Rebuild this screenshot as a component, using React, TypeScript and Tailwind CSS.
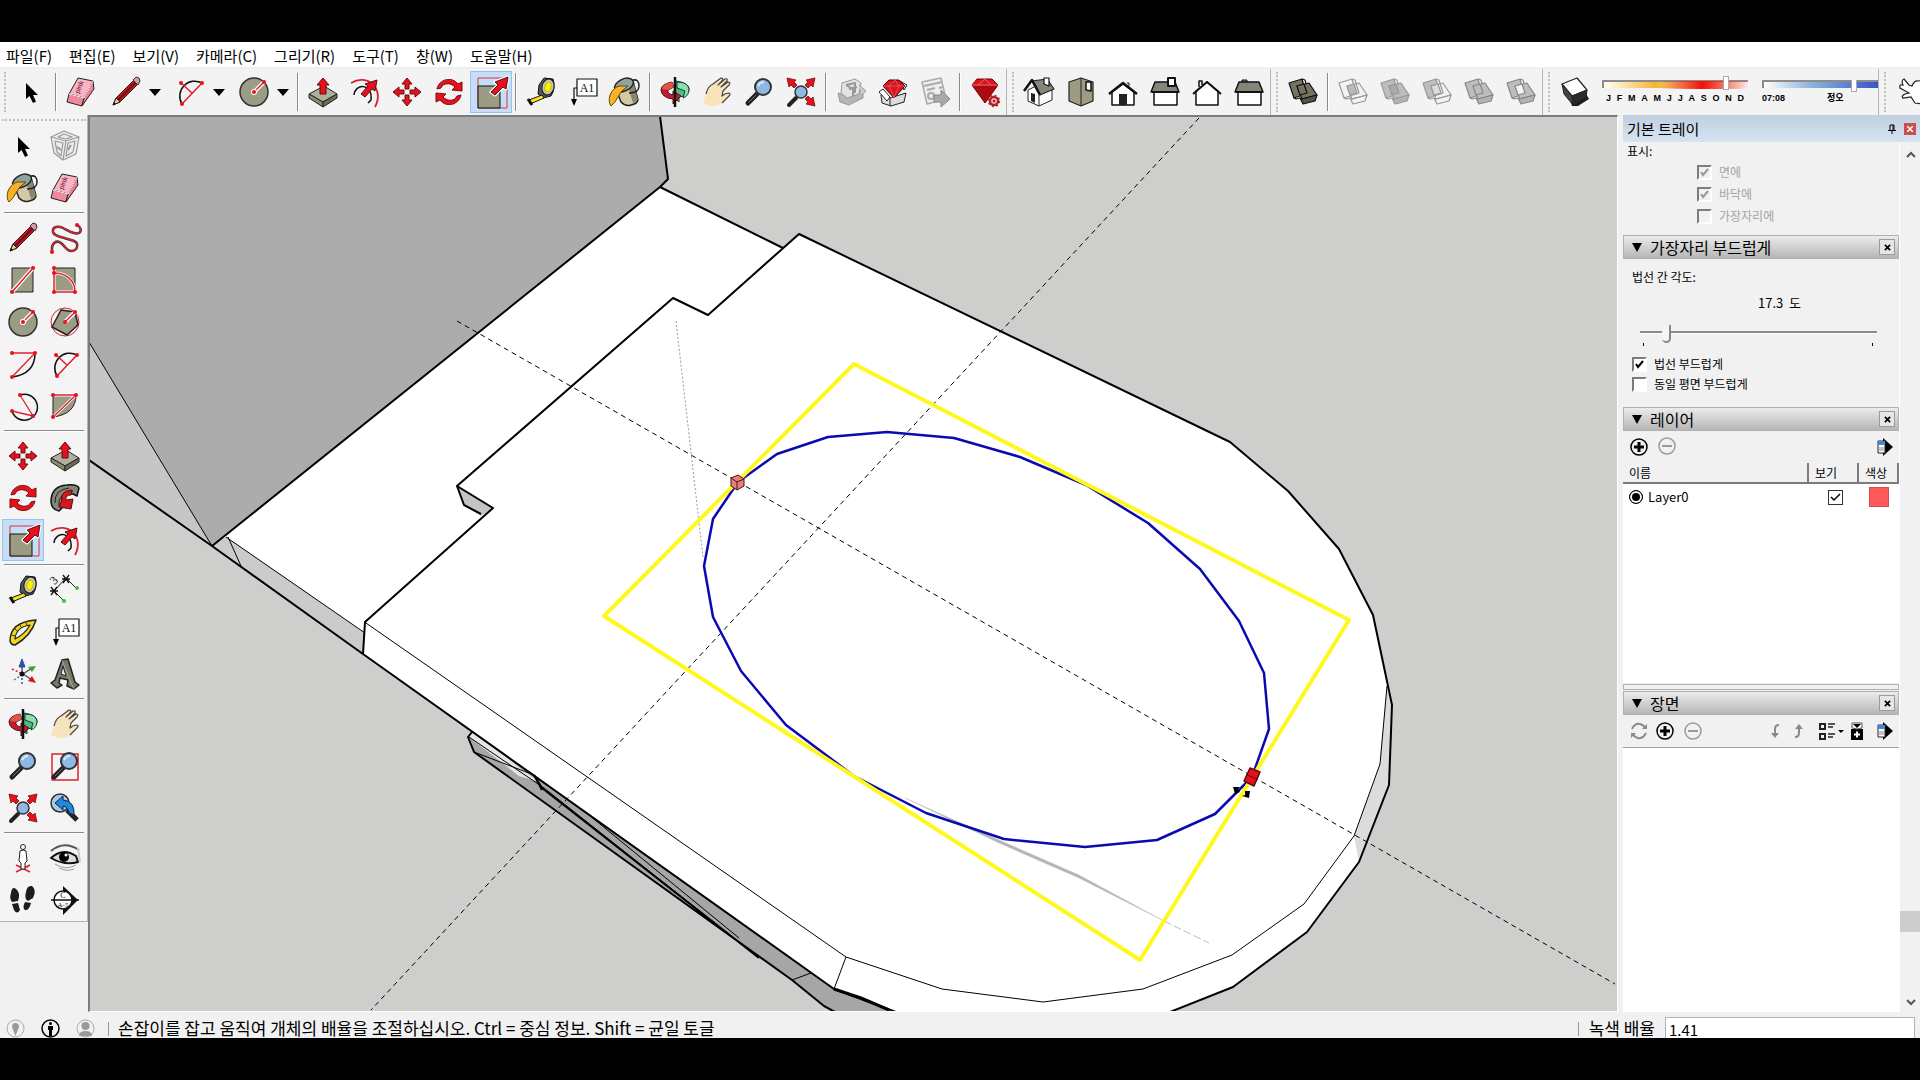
import type { ReactNode } from "react";

const menus = ["파일(F)", "편집(E)", "보기(V)", "카메라(C)", "그리기(R)", "도구(T)", "창(W)", "도움말(H)"];

const Icon = ({ children }: { children: ReactNode }) => (
  <svg viewBox="0 0 32 32" className="h-8 w-8 shrink-0 overflow-visible" fill="none" strokeLinejoin="round" aria-hidden="true">
    {children}
  </svg>
);

const Dot = ({ x, y }: { x: number; y: number }) => <circle cx={x} cy={y} r="2" fill="#e8101c" />;

const Select = () => (
  <Icon><path d="M11 7V23L14.500 20L18 27L21 25.500L18 19H23Z" fill="#000" /></Icon>
);

const Eraser = () => (
  <Icon>
    <path d="M13 2L28 5L19 22L4 18Z" fill="#fbb4c4" stroke="#222" />
    <path d="M4 18L19 22L17 30L2 26Z" fill="#f4879c" stroke="#222" />
    <path d="M28 5L29 13L17 30L19 22Z" fill="#f77c93" stroke="#222" />
    <path d="M4 18L19 22L28 5" stroke="#fff" />
    <text x="0" y="0" transform="translate(14 18) rotate(-68)" fontSize="7" fontFamily="Liberation Sans" fill="#411">pink</text>
  </Icon>
);

const Pencil = () => (
  <Icon>
    <path d="M3 29L6 22L24 4L28 8L10 26Z" fill="#c9151e" stroke="#222" />
    <path d="M8 24L26 6" stroke="#6b1015" strokeWidth="2" />
    <path d="M3 29L6 22L10 26Z" fill="#e4cf9b" stroke="#222" />
    <path d="M3 29L4 26L6 28Z" fill="#111" />
    <path d="M23 4L26 1Q30 1 30 5L28 9Z" fill="#d59ba0" stroke="#333" />
  </Icon>
);

const TwoPointArc = () => (
  <Icon>
    <path d="M8 28A15 15 0 0 1 28 7" stroke="#111" strokeWidth="1.500" />
    <path d="M8 28L28 7M18 17L7 7" stroke="#e02030" strokeWidth="1.500" />
    <Dot x={8} y={28} /><Dot x={28} y={7} /><Dot x={7} y={7} />
  </Icon>
);

const CircleTool = () => (
  <Icon>
    <circle cx="16" cy="16" r="14" fill="#9c9c84" stroke="#333" strokeWidth="1.500" />
    <path d="M16 16L26 6" stroke="#fff" strokeWidth="4" />
    <path d="M16 16L26 6" stroke="#e02030" strokeWidth="1.500" />
    <circle cx="16" cy="16" r="3" fill="#fff" />
    <Dot x={16} y={16} /><Dot x={26} y={6} />
  </Icon>
);

const PushPull = () => (
  <Icon>
    <path d="M2 18L17 10L30 18L16 26Z" fill="#b0b09a" stroke="#222" />
    <path d="M2 18L16 26V31L2 22Z" fill="#8b8b75" stroke="#222" />
    <path d="M30 18L16 26V31L30 22Z" fill="#6c6c5a" stroke="#222" />
    <path d="M16 2L22 9H19V18H13V9H10Z" fill="#e8101c" stroke="#511" />
  </Icon>
);

const Offset = () => (
  <Icon>
    <path d="M2 7C18 -3 36 12 26 31" stroke="#d9222e" strokeWidth="1.800" />
    <path d="M5 19C6 7 24 7 22 24L19 27" stroke="#111" strokeWidth="1.500" />
    <path d="M12 18L19 10L16 8L28 4L26 15L23 13L16 21Z" fill="#e8101c" stroke="#511" />
  </Icon>
);

const arrowUp = "M16 2L21 8H18V13H14V8H11Z";
const Move = () => (
  <Icon>
    <g fill="#e8101c" stroke="#611">
      <path d={arrowUp} />
      <path d={arrowUp} transform="rotate(90 16 16)" />
      <path d={arrowUp} transform="rotate(180 16 16)" />
      <path d={arrowUp} transform="rotate(270 16 16)" />
    </g>
  </Icon>
);

const turnArrow = "M4 13C6 3 19 0 25 8L29 6L29 15L19 14L22 11C17 6 10 7 8 12Z";
const Rotate = () => (
  <Icon>
    <g fill="#e8101c" stroke="#711">
      <path d={turnArrow} />
      <path d={turnArrow} transform="rotate(180 16 16)" />
    </g>
  </Icon>
);

const Scale = () => (
  <Icon>
    <path d="M3 2H32V32H3Z" stroke="#e0303c" />
    <path d="M3 10H25V32H3Z" fill="#9c9c84" stroke="#111" />
    <path d="M16 16L23 9L20 6L33 1L31 13L28 11L20 19Z" fill="#e8101c" stroke="#fff" strokeWidth="3" />
    <path d="M16 16L23 9L20 6L33 1L31 13L28 11L20 19Z" fill="#e8101c" stroke="#511" />
  </Icon>
);

const Tape = () => (
  <Icon>
    <path d="M14 9L19 2L28 3Q31 12 26 20L18 22L13 18Z" fill="#555" stroke="#111" />
    <ellipse cx="23" cy="11" rx="6" ry="8" fill="#c8c8b4" stroke="#111" transform="rotate(15 23 11)" />
    <ellipse cx="23" cy="11" rx="3" ry="5" fill="#fff200" stroke="#bb0" transform="rotate(15 23 11)" />
    <path d="M17 19L4 24L5 28L19 22Z" fill="#f5e61e" stroke="#111" />
    <path d="M3 23L7 29" stroke="#111" strokeWidth="3" />
  </Icon>
);

const Label = () => (
  <Icon>
    <path d="M10 3H30V20H10Z" fill="#fff" stroke="#111" strokeWidth="1.200" />
    <path d="M10 12H7V25" stroke="#111" strokeWidth="1.200" />
    <path d="M4 23H10L7 30Z" fill="#000" />
    <text x="20" y="16" textAnchor="middle" fontSize="12" fontFamily="Liberation Serif" fill="#111">A1</text>
  </Icon>
);

const Bucket = () => (
  <Icon>
    <path d="M7 13L12 26Q17 31 22 29Q28 28 29 24L24 5Z" fill="#d3c9a4" stroke="#222" strokeWidth="1.500" />
    <path d="M20 14L25 8L29 24L24 27Z" fill="#8c8670" />
    <ellipse cx="15" cy="9" rx="10" ry="6" transform="rotate(-25 15 9)" fill="#8fa39f" stroke="#222" strokeWidth="1.500" />
    <path d="M24 4Q30 3 30 10Q30 17 20 17" stroke="#222" strokeWidth="1.500" />
    <path d="M10 10L19 10Q12 14 9 21Q6 27 2 30Q-1 26 1 19Q4 12 10 10Z" fill="#f9b222" stroke="#664411" />
  </Icon>
);

const Orbit = () => (
  <Icon>
    <path d="M17 5Q31 7 30 14Q29 20 20 21V26L13 20" fill="#57b884" stroke="#143" />
    <path d="M18 6V12L26 15L24 22Q30 20 30 13Q29 6 18 6Z" fill="#8fdcae" stroke="#143" />
    <path d="M13 6Q2 8 2 14Q3 22 14 23V28L22 20L14 15V19Q8 18 9 14L15 11Z" fill="#c41a34" stroke="#411" />
    <path d="M13 6Q3 8 3 13L9 14L15 11Z" fill="#e05548" />
    <path d="M16 1V31" stroke="#111" strokeWidth="2.500" />
  </Icon>
);

const Hand = () => (
  <Icon>
    <path d="M2 27L5 18Q7 10 12 8L20 2Q23 2 21 5L17 9L24 3Q27 2 26 5L20 11L27 6Q30 6 28 9L22 15L21 20Q24 17 28 17Q30 18 28 20L21 27Q15 31 9 30Z" fill="#f7e3bc" />
    <path d="M5 18Q7 10 12 8L20 2Q23 2 21 5L17 9L24 3Q27 2 26 5L20 11L27 6Q30 6 28 9L22 15L21 20Q24 17 28 17Q30 18 28 20L21 27" stroke="#444" strokeWidth="1.200" />
  </Icon>
);

const Lens = () => (
  <>
    <path d="M5 27L14 18" stroke="#222" strokeWidth="5" strokeLinecap="round" />
    <path d="M6 26L13 19" stroke="#777" strokeLinecap="round" />
    <circle cx="20" cy="11" r="8" fill="#8fb8e4" stroke="#333" strokeWidth="2" />
    <path d="M15 10Q17 6 21 6" stroke="#dcebfa" strokeWidth="2" />
  </>
);

const Zoom = () => <Icon><Lens /></Icon>;

const ZoomWindow = () => (
  <Icon><path d="M3 4H29V30H3Z" stroke="#e02030" strokeWidth="1.500" /><Lens /></Icon>
);

const cornerArrow = "M2 2L11 4L9 6L12 9L9 12L6 9L4 11Z";
const ZoomExtents = () => (
  <Icon>
    <path d="M4 29L11 22" stroke="#222" strokeWidth="4" strokeLinecap="round" />
    <circle cx="16" cy="16" r="6" fill="#8fb8e4" stroke="#333" strokeWidth="1.500" />
    <g fill="#e8101c" stroke="#611" strokeWidth="0.800">
      <path d={cornerArrow} />
      <path d={cornerArrow} transform="rotate(90 16 16)" />
      <path d={cornerArrow} transform="rotate(180 16 16)" />
    </g>
  </Icon>
);

const Warehouse = () => (
  <Icon>
    <path d="M3 17L12 20L28 13V22L14 29L5 26Z" fill="#b5b5b5" stroke="#999" />
    <path d="M7 7L20 3L26 7L24 18L12 22L6 17Z" fill="#e3e3e3" stroke="#999" />
    <path d="M11 9L20 7V17M11 9L18 13V20M14 13L22 11" stroke="#999" strokeWidth="2" />
    <path d="M24 9L31 15L27 19" fill="#ccc" stroke="#999" />
  </Icon>
);

const ExtensionWarehouse = () => (
  <Icon>
    <path d="M4 19L13 22L29 17L27 26L14 30L5 27Z" fill="#ddd" stroke="#222" />
    <path d="M2 16L6 13L13 21L10 25ZM23 5L30 9L27 14Z" fill="#fff" stroke="#222" />
    <path d="M13 22V30" stroke="#222" />
    <path d="M6 10L12 4H22L28 10L17 22Z" fill="#d9161f" stroke="#400" />
    <path d="M6 10H28M12 10L17 22L22 10L18 4L12 10" stroke="#e86a6a" strokeWidth="0.700" />
  </Icon>
);

const SendLayout = () => (
  <Icon>
    <path d="M3 6L22 2L27 23L8 28Z" fill="#eee" stroke="#aaa" strokeWidth="1.500" />
    <path d="M5 10L23 6M8 14L16 12M20 12L24 11" stroke="#aaa" strokeWidth="2" />
    <circle cx="12" cy="20" r="3" stroke="#aaa" strokeWidth="2" />
    <path d="M15 19H22V14L31 23L22 31V26H15Z" fill="#aaa" stroke="#888" />
  </Icon>
);

const Ruby = () => (
  <Icon>
    <path d="M3 9L8 3H23L29 9L16 27Z" fill="#d9161f" stroke="#700" />
    <path d="M4 10H28L16 27Z" fill="#7a0008" fillOpacity="0.500" />
    <path d="M3 9H29M9 9L16 3L22 9" stroke="#f47b7b" strokeWidth="0.700" />
    <circle cx="25" cy="25" r="4" fill="#f2dada" stroke="#b52026" strokeWidth="2.500" />
    <circle cx="25" cy="25" r="5.500" stroke="#b52026" strokeWidth="1.500" strokeDasharray="2 2.300" />
    <circle cx="25" cy="25" r="1.500" fill="#b52026" />
  </Icon>
);

const HouseIso = () => (
  <Icon>
    <path d="M5 14V25L16 30L29 24V14L17 8Z" fill="#fff" stroke="#222" />
    <path d="M16 19V30" stroke="#222" />
    <path d="M9 5L24 3L31 13L17 19Z" fill="#85857a" stroke="#222" strokeWidth="1.200" />
    <path d="M1 15L9 4L17 19" stroke="#111" strokeWidth="2.500" />
    <path d="M8 17L12 18V27L8 25Z" fill="#222" />
    <path d="M21 2H26V10L21 8Z" fill="#fff" stroke="#111" strokeWidth="1.200" />
  </Icon>
);

const BoxTop = () => (
  <Icon>
    <path d="M4 6L16 2L28 6V25L16 30L4 25Z" fill="#9d9c83" stroke="#222" strokeWidth="1.200" />
    <path d="M16 2V30" stroke="#222" />
    <path d="M21 6H26V15L21 14Z" fill="#fff" stroke="#111" strokeWidth="1.500" />
  </Icon>
);

const HouseFront = () => (
  <Icon>
    <path d="M5 16L16 8L27 16V29H5Z" fill="#fff" stroke="#111" strokeWidth="1.500" />
    <path d="M2 18L16 7L30 18" stroke="#111" strokeWidth="2.500" />
    <path d="M12 18H20V29H12Z" fill="#222" />
    <path d="M20 7H22V10" stroke="#111" />
  </Icon>
);

const HouseBack = () => (
  <Icon>
    <path d="M5 15L16 6L27 15V29H5Z" fill="#fff" stroke="#111" strokeWidth="1.500" />
    <path d="M2 18L16 6L30 18" stroke="#111" strokeWidth="2" />
    <path d="M8 11V5H11V9" fill="#fff" stroke="#111" strokeWidth="1.500" />
  </Icon>
);

const HouseRight = () => (
  <Icon>
    <path d="M5 16H28V29H5Z" fill="#fff" stroke="#111" strokeWidth="1.500" />
    <path d="M6 6H26L30 16H2Z" fill="#85857a" stroke="#111" strokeWidth="1.500" />
    <path d="M19 2H26V10H19Z" fill="#fff" stroke="#111" strokeWidth="2" />
    <path d="M3 16H30" stroke="#111" strokeWidth="2" />
  </Icon>
);

const HouseLeft = () => (
  <Icon>
    <path d="M9 6V4H14V6" fill="#85857a" stroke="#111" />
    <path d="M5 16H28V29H5Z" fill="#fff" stroke="#111" strokeWidth="1.500" />
    <path d="M6 6H26L30 16H2Z" fill="#85857a" stroke="#111" strokeWidth="1.500" />
    <path d="M3 16H30" stroke="#111" strokeWidth="2" />
  </Icon>
);

type SolidProps = { back: string; front: string; cut: string; line: string; side: string };
const Solid = ({ back, front, cut, line, side }: SolidProps) => (
  <Icon>
    <g stroke={line} strokeWidth="1.200">
      <path d="M2 7L15 3L19 18L7 22Z" fill={back} />
      <path d="M15 3L18 4L22 17L19 18M7 22L9 23L13 22" />
      <path d="M10 10L22 7L30 19L15 23Z" fill={front} />
      <path d="M15 23L30 19L28 25L16 28L13 22Z" fill={side} />
      <path d="M10 10L17 8L20 17L13 19Z" fill={cut} />
    </g>
  </Icon>
);
const solids: SolidProps[] = [
  { back: "none", front: "none", cut: "#bbb", line: "#999", side: "none" },
  { back: "#bdbdbd", front: "#bdbdbd", cut: "#aaa", line: "#999", side: "#b3b3b3" },
  { back: "#bdbdbd", front: "none", cut: "#ddd", line: "#999", side: "none" },
  { back: "#bdbdbd", front: "#bdbdbd", cut: "#bdbdbd", line: "#888", side: "#b3b3b3" },
  { back: "#bdbdbd", front: "#bdbdbd", cut: "#f4f4f4", line: "#888", side: "#b3b3b3" },
];

const ShadowCube = () => (
  <Icon>
    <path d="M10 20L26 16L30 23L19 30H13Z" fill="#1c1c1c" />
    <path d="M3 8L18 2L28 14L13 20Z" fill="#fff" stroke="#222" strokeWidth="1.200" />
    <path d="M3 8L13 20L14 29L5 18Z" fill="#444" stroke="#222" />
    <path d="M13 20L28 14L27 21L14 29Z" fill="#2a2a2a" stroke="#222" />
  </Icon>
);

const ComponentBox = () => (
  <Icon>
    <g stroke="#999" strokeWidth="1.200">
      <path d="M2 7L15 1L30 7L27 24L14 30L5 23Z" fill="#ececec" />
      <path d="M2 7L17 11L30 7M17 11L14 30" />
      <path d="M6 11L14 13L12 26L8 22ZM19 13L26 11L24 22L17 26ZM9 7L15 4L23 7L17 9Z" />
      <path d="M8 17L12 20M19 20L22 15" strokeWidth="2" />
    </g>
  </Icon>
);

const freehandCurve = "M3 30C2 20 8 18 12 21C17 25 18 30 23 29C29 28 30 21 25 19C18 16 5 15 4 10C3 4 10 4 14 6C20 9 26 13 30 11C33 9 32 5 28 3";
const Freehand = () => (
  <Icon>
    <path d={freehandCurve} stroke="#333" strokeWidth="2.500" />
    <path d={freehandCurve} stroke="#e02030" strokeWidth="1.300" />
    <Dot x={3} y={30} /><Dot x={28} y={3} />
  </Icon>
);

const Rectangle = () => (
  <Icon>
    <path d="M5 4H26V28H5Z" fill="#9c9c84" stroke="#222" />
    <path d="M5 28L26 4" stroke="#fff" strokeWidth="4" />
    <path d="M5 28L26 4" stroke="#e02030" strokeWidth="1.500" />
    <Dot x={5} y={28} /><Dot x={26} y={4} />
  </Icon>
);

const RotatedRectangle = () => (
  <Icon>
    <path d="M5 4H26V28H5Z" fill="#9c9c84" stroke="#222" />
    <path d="M5 4V28H26C26 17 18 9 5 9" stroke="#fff" strokeWidth="3" />
    <path d="M5 4V28H26C26 17 18 9 5 9" stroke="#e02030" strokeWidth="1.500" />
    <Dot x={5} y={4} /><Dot x={5} y={9} /><Dot x={5} y={28} /><Dot x={26} y={28} />
  </Icon>
);

const Polygon = () => (
  <Icon>
    <circle cx="16" cy="16" r="14" stroke="#e02030" />
    <path d="M12 4L26 6L29 19L18 29L3 21Z" fill="#9c9c84" stroke="#222" strokeWidth="1.500" />
    <path d="M16 16L26 6" stroke="#fff" strokeWidth="4" />
    <path d="M16 16L26 6" stroke="#e02030" strokeWidth="1.500" />
    <Dot x={16} y={16} /><Dot x={26} y={6} />
  </Icon>
);

const ArcTool = () => (
  <Icon>
    <path d="M28 5Q28 26 5 29" stroke="#111" strokeWidth="1.500" />
    <path d="M5 5H28L5 29" stroke="#e02030" strokeWidth="1.300" />
    <Dot x={5} y={5} /><Dot x={28} y={5} /><Dot x={5} y={29} />
  </Icon>
);

const ThreePointArc = () => (
  <Icon>
    <path d="M13 5A13 13 0 1 1 5 21" stroke="#111" strokeWidth="1.500" />
    <path d="M13 5L26 26L5 21" stroke="#e02030" strokeWidth="1.300" />
    <Dot x={13} y={5} /><Dot x={26} y={26} /><Dot x={5} y={21} />
  </Icon>
);

const Pie = () => (
  <Icon>
    <path d="M4 5H27Q27 24 4 27Z" fill="#9c9c84" stroke="#222" />
    <path d="M4 5H27L4 27" stroke="#fff" strokeWidth="3" />
    <path d="M4 5H27L4 27" stroke="#e02030" strokeWidth="1.300" />
    <Dot x={4} y={5} /><Dot x={27} y={5} /><Dot x={4} y={27} />
  </Icon>
);

const FollowMe = () => (
  <Icon>
    <path d="M2 20Q2 4 18 3Q28 2 30 6L28 14L24 12Q13 10 13 17Q13 20 16 23L10 29Q3 28 2 20Z" fill="#85857a" stroke="#111" strokeWidth="1.500" />
    <path d="M6 21Q5 8 20 6M10 24Q8 12 24 9" stroke="#222" />
    <path d="M13 18Q11 9 23 8L22 13Q16 13 17 18L24 17L22 27L10 25Z" fill="#d9161f" stroke="#511" />
  </Icon>
);

const Dimension = () => (
  <Icon>
    <path d="M5 17L17 4" stroke="#111" />
    <path d="M5 17L15 27M17 4L28 15" stroke="#222" />
    <path d="M1 17H9M2 13L8 21M8 13L2 21M13 5H21M14 1L20 9M20 1L14 9" stroke="#111" strokeWidth="1.300" />
    <circle cx="15" cy="27" r="2" fill="#3fc03f" /><circle cx="28" cy="14" r="2" fill="#3fc03f" />
    <text x="3" y="9" fontSize="12" fontFamily="Liberation Serif" fill="#111" transform="rotate(-45 7 7)">3</text>
  </Icon>
);

const Protractor = () => (
  <Icon>
    <path d="M3 25Q3 6 29 4Q24 20 8 29Q4 29 3 25Z" fill="#f2d71c" stroke="#222" strokeWidth="1.500" />
    <path d="M8 23Q9 11 23 9Q18 18 8 23Z" fill="#f3f3f3" stroke="#222" strokeWidth="1.200" />
    <path d="M5 19L8 20M8 13L10 15M13 9L14 11M19 7L20 9" stroke="#443300" />
  </Icon>
);

const Axes = () => (
  <Icon>
    <path d="M15 16V28" stroke="#2c57b0" strokeWidth="1.500" strokeDasharray="2 2" />
    <path d="M5 11L16 16" stroke="#d22" strokeWidth="1.500" strokeDasharray="2 2" />
    <path d="M7 22L16 16" stroke="#3a3" strokeWidth="1.500" strokeDasharray="2 2" />
    <path d="M15 16V7M16 16L25 10M16 16L25 22" stroke="#555" strokeWidth="1.500" />
    <path d="M15 1L18 9H12Z" fill="#2452a4" stroke="#2452a4" />
    <path d="M29 8L25 14L21 9Z" fill="#3c9e3c" />
    <path d="M29 25L21 23L25 18Z" fill="#d9161f" />
    <circle cx="15" cy="16" r="2.500" fill="#111" />
  </Icon>
);

const Text3D = () => (
  <Icon>
    <path d="M13 2L19 1L26 24L30 27L25 31L18 28L19 22L11 20L10 25L13 27L8 30L2 25L6 22Z" fill="#77776a" stroke="#222" strokeWidth="1.500" />
    <path d="M14 8L12 16L17 18Z" fill="#f3f3f3" stroke="#222" />
    <path d="M13 2L22 25L25 31" stroke="#aaaa98" />
  </Icon>
);

const ZoomPrevious = () => (
  <Icon>
    <circle cx="11" cy="11" r="9" fill="#a9c9ea" stroke="#333" strokeWidth="1.500" />
    <path d="M18 18L28 28" stroke="#222" strokeWidth="5" />
    <path d="M6 11L14 4V8Q26 9 25 23L20 21Q19 15 14 14V18Z" fill="#2188e0" stroke="#124" />
  </Icon>
);

const PositionCamera = () => (
  <Icon>
    <path d="M9 23L23 30M23 23L9 30M12 25H21" stroke="#e02030" strokeWidth="1.500" />
    <path d="M13 9Q16 7 19 9L20 19L18 21V27H14V21L12 19Z" fill="#fff" stroke="#222" />
    <circle cx="16" cy="5" r="2.500" fill="#fff" stroke="#222" />
  </Icon>
);

const LookAround = () => (
  <Icon>
    <path d="M2 9Q15 -2 30 8" stroke="#555" strokeWidth="2" />
    <path d="M2 16Q14 5 27 14L29 20Q16 24 2 16Z" fill="#ddd" stroke="#111" strokeWidth="2" />
    <circle cx="15" cy="15" r="5" fill="#000" />
    <circle cx="17" cy="13" r="1.500" fill="#fff" />
    <path d="M6 22Q17 29 27 23M10 26Q18 30 25 27" stroke="#999" />
    <path d="M29 6L31 20" stroke="#ccc" strokeWidth="2" />
  </Icon>
);

const Walk = () => (
  <Icon>
    <path d="M4 9Q5 2 9 5Q14 9 11 17L5 18Q2 14 4 9ZM5 20L11 19L13 26Q10 31 7 26ZM19 8Q20 1 25 2Q30 6 26 14L21 17Q17 15 19 8ZM18 18L24 19Q22 27 18 26Q15 24 18 18Z" fill="#1c1c1c" />
  </Icon>
);

const SectionPlane = () => (
  <Icon>
    <path d="M14 2L29 16L14 31V2Z" fill="#111" />
    <circle cx="14" cy="16" r="9" fill="#fff" stroke="#111" strokeWidth="1.500" />
    <path d="M2 16H30" stroke="#111" strokeWidth="1.500" />
    <text x="14" y="14" textAnchor="middle" fontSize="8" fontFamily="Liberation Serif" fill="#111">C</text>
    <text x="14" y="23" textAnchor="middle" fontSize="7" fontFamily="Liberation Serif" fill="#111">A-5</text>
  </Icon>
);

const Tool = ({ name, active, children }: { name: string; active?: boolean; children: ReactNode }) => (
  <button
    aria-label={name}
    className={
      active
        ? "flex h-[42px] w-[42px] shrink-0 items-center justify-center border border-[#92c4ee] bg-[#c5def5]"
        : "flex h-[42px] w-[42px] shrink-0 items-center justify-center"
    }
  >
    {children}
  </button>
);

const ToolMenu = ({ name, children }: { name: string; children: ReactNode }) => (
  <div className="flex w-16 shrink-0 items-center pl-[3px]">
    <Tool name={name}>{children}</Tool>
    <button aria-label={`${name} 메뉴`} className="flex h-[42px] w-4 items-center justify-center">
      <svg viewBox="0 0 12 7" className="h-[7px] w-3"><path d="M0 0H12L6 7Z" /></svg>
    </button>
  </div>
);

const Sep = () => <div className="mx-[3px] h-[38px] w-[2px] shrink-0 border-l border-[#8a8a8a] bg-white" />;
const PaletteSep = () => <div className="mx-[2px] my-[3px] h-[2px] border-t border-[#8a8a8a] bg-white" />;
const Grip = () => (
  <div className="flex h-full w-3 shrink-0 items-center justify-center border-l border-[#b4b4b4]">
    <div className="h-10 border-l-2 border-dotted border-[#c0c0c0]" />
  </div>
);

const Toolbar = () => (
  <div className="flex h-12 shrink-0 items-center overflow-hidden border-t-2 border-[#efefef] bg-[#f3f3f3]">
    <div className="ml-1 mr-1 h-10 border-l-2 border-dotted border-[#c0c0c0]" />
    <Tool name="선택"><Select /></Tool>
    <Sep />
    <Tool name="지우개"><Eraser /></Tool>
    <ToolMenu name="선"><Pencil /></ToolMenu>
    <ToolMenu name="호"><TwoPointArc /></ToolMenu>
    <ToolMenu name="원"><CircleTool /></ToolMenu>
    <Sep />
    <Tool name="밀기/끌기"><PushPull /></Tool>
    <Tool name="오프셋"><Offset /></Tool>
    <Tool name="이동"><Move /></Tool>
    <Tool name="회전"><Rotate /></Tool>
    <Tool name="배율" active><Scale /></Tool>
    <Sep />
    <Tool name="줄자"><Tape /></Tool>
    <Tool name="텍스트"><Label /></Tool>
    <Tool name="페인트통"><Bucket /></Tool>
    <Sep />
    <Tool name="궤도"><Orbit /></Tool>
    <Tool name="이동 보기"><Hand /></Tool>
    <Tool name="확대/축소"><Zoom /></Tool>
    <Tool name="범위 확대/축소"><ZoomExtents /></Tool>
    <Sep />
    <Tool name="3D Warehouse"><Warehouse /></Tool>
    <Tool name="Extension Warehouse"><ExtensionWarehouse /></Tool>
    <Tool name="LayOut"><SendLayout /></Tool>
    <Sep />
    <Tool name="확장 관리자"><Ruby /></Tool>
    <Grip />
    <Tool name="등각"><HouseIso /></Tool>
    <Tool name="위"><BoxTop /></Tool>
    <Tool name="정면"><HouseFront /></Tool>
    <Tool name="오른쪽"><HouseRight /></Tool>
    <Tool name="뒤"><HouseBack /></Tool>
    <Tool name="왼쪽"><HouseLeft /></Tool>
    <Grip />
    <Tool name="외부 셸"><Solid back="#73735f" front="#73735f" cut="#73735f" line="#111" side="#55554a" /></Tool>
    <Sep />
    {solids.map((s, i) => (
      <Tool key={i} name={`솔리드 ${i + 1}`}><Solid {...s} /></Tool>
    ))}
    <Grip />
    <Tool name="그림자"><ShadowCube /></Tool>
    <div className="ml-[6px] w-[146px] shrink-0">
      <input
        type="range"
        aria-label="날짜"
        min={0}
        max={100}
        defaultValue={86}
        className="block h-2 w-full appearance-none border-l-2 border-t-2 border-[#8c8c8c] bg-linear-to-r from-[#fffef0] via-[#f5b62a] via-35% to-[#fde8e8] [&::-webkit-slider-runnable-track]:h-2 [&::-webkit-slider-runnable-track]:bg-linear-to-r [&::-webkit-slider-runnable-track]:from-transparent [&::-webkit-slider-runnable-track]:from-40% [&::-webkit-slider-runnable-track]:via-[#f01008] [&::-webkit-slider-runnable-track]:via-68% [&::-webkit-slider-runnable-track]:to-transparent [&::-webkit-slider-thumb]:-mt-1 [&::-webkit-slider-thumb]:h-3 [&::-webkit-slider-thumb]:w-1 [&::-webkit-slider-thumb]:appearance-none [&::-webkit-slider-thumb]:bg-white [&::-webkit-slider-thumb]:outline [&::-webkit-slider-thumb]:outline-[#aaa]"
      />
      <div className="mt-1 flex justify-between px-1 font-['Liberation_Sans'] text-[9px] leading-3 font-bold">
        {"JFMAMJJASOND".split("").map((m, i) => <span key={i}>{m}</span>)}
      </div>
    </div>
    <div className="ml-[14px] w-[116px] shrink-0 overflow-hidden">
      <input
        type="range"
        aria-label="시간"
        min={0}
        max={100}
        defaultValue={80}
        className="block h-2 w-full appearance-none border-l-2 border-t-2 border-[#8c8c8c] bg-linear-to-r from-white via-[#8db6da] via-40% to-[#3a52c8] [&::-webkit-slider-thumb]:h-3 [&::-webkit-slider-thumb]:w-1 [&::-webkit-slider-thumb]:appearance-none [&::-webkit-slider-thumb]:bg-white [&::-webkit-slider-thumb]:outline [&::-webkit-slider-thumb]:outline-[#aaa]"
      />
      <div className="mt-1 flex gap-[42px] font-['Liberation_Sans','Noto_Sans_CJK_KR',sans-serif] text-[9px] leading-3 font-bold">
        <span>07:08</span>
        <span>정오</span>
      </div>
    </div>
    <Grip />
    <Tool name="손">
      <svg viewBox="0 0 32 32" className="h-8 w-8" fill="#fff" stroke="#222" strokeWidth="1.200">
        <path d="M8 9Q6 4 9 3L14 9L17 10Q19 4 24 5L28 4V28L20 27L16 21L8 22Q6 20 10 18L14 17L5 12Q4 8 8 9Z" />
      </svg>
    </Tool>
  </div>
);

const Palette = () => (
  <nav className="w-[88px] shrink-0 overflow-hidden bg-[#f1f1f1]">
    <div className="border-r border-b border-[#b4b4b4] bg-[#f4f4f4] pt-1 pr-px pl-[2px]">
      <div className="mb-1 border-t-2 border-dotted border-[#c0c0c0]" />
      <div className="flex flex-wrap">
        <Tool name="선택"><Select /></Tool>
        <Tool name="구성 요소"><ComponentBox /></Tool>
        <Tool name="페인트통"><Bucket /></Tool>
        <Tool name="지우개"><Eraser /></Tool>
      </div>
      <PaletteSep />
      <div className="flex flex-wrap">
        <Tool name="선"><Pencil /></Tool>
        <Tool name="자유 곡선"><Freehand /></Tool>
        <Tool name="직사각형"><Rectangle /></Tool>
        <Tool name="회전 직사각형"><RotatedRectangle /></Tool>
        <Tool name="원"><CircleTool /></Tool>
        <Tool name="다각형"><Polygon /></Tool>
        <Tool name="호"><ArcTool /></Tool>
        <Tool name="2점 호"><TwoPointArc /></Tool>
        <Tool name="3점 호"><ThreePointArc /></Tool>
        <Tool name="파이"><Pie /></Tool>
      </div>
      <PaletteSep />
      <div className="flex flex-wrap">
        <Tool name="이동"><Move /></Tool>
        <Tool name="밀기/끌기"><PushPull /></Tool>
        <Tool name="회전"><Rotate /></Tool>
        <Tool name="따라가기"><FollowMe /></Tool>
        <Tool name="배율" active><Scale /></Tool>
        <Tool name="오프셋"><Offset /></Tool>
      </div>
      <PaletteSep />
      <div className="flex flex-wrap">
        <Tool name="줄자"><Tape /></Tool>
        <Tool name="치수"><Dimension /></Tool>
        <Tool name="각도기"><Protractor /></Tool>
        <Tool name="텍스트"><Label /></Tool>
        <Tool name="축"><Axes /></Tool>
        <Tool name="3D 텍스트"><Text3D /></Tool>
      </div>
      <PaletteSep />
      <div className="flex flex-wrap">
        <Tool name="궤도"><Orbit /></Tool>
        <Tool name="이동 보기"><Hand /></Tool>
        <Tool name="확대/축소"><Zoom /></Tool>
        <Tool name="확대 창"><ZoomWindow /></Tool>
        <Tool name="범위 확대/축소"><ZoomExtents /></Tool>
        <Tool name="이전"><ZoomPrevious /></Tool>
      </div>
      <PaletteSep />
      <div className="flex flex-wrap">
        <Tool name="카메라 위치"><PositionCamera /></Tool>
        <Tool name="둘러보기"><LookAround /></Tool>
        <Tool name="걷기"><Walk /></Tool>
        <Tool name="단면"><SectionPlane /></Tool>
      </div>
    </div>
  </nav>
);

const Viewport = () => (
  <main className="min-w-0 flex-1 border-t-2 border-r border-b border-l-2 border-t-[#7c7c7c] border-r-white border-b-white border-l-[#7c7c7c] bg-[#cececc]">
    <svg viewBox="91 117 1527 894" preserveAspectRatio="xMinYMin slice" className="block h-full w-full" fill="none" strokeLinejoin="round">
      {/* tank */}
      <path d="M90 116H661L669 179L661 187L213 546L90 342Z" fill="#acacac" />
      <path d="M90 342L213 546L90 460Z" fill="#c6c6c6" />
      {/* under side of the bowl */}
      <path d="M470 735L475 752L793 980L825 1006L834 1012H897L835 989L473 732Z" fill="#a6a6a6" />
      <path d="M473 732L540 782L520 776L470 737Z" fill="#e6e6e6" />
      {/* base and seat */}
      <path d="M661 187L784 248L800 234L1231 442L1289 491L1340 549L1374 615L1393 705L1390 785L1360 862L1308 932L1234 987L1171 1012H897L835 989L364 654L366 634L227 537L213 546Z" fill="#fff" />
      <path d="M213 546L227 537L366 633L364 652Z" fill="#cbcbcb" />
      <path d="M458 486L494 508L482 516L465 505Z" fill="#c4c4c4" />
      <path d="M1388 686L1393 705L1390 785L1360 862L1355 836L1381 764Z" fill="#dcdcdc" />
      <g stroke="#000" strokeWidth="1">
        <path d="M90 342L213 546M227 537L366 633M229 537L242 566M367 623L847 957L943 989L1044 1002L1144 989L1233 955L1305 904L1355 836L1381 764L1388 686M847 957L835 989" />
        <path d="M793 980L812 973M470 737L545 788L750 950M475 752L535 775M590 815L740 938" />
      </g>
      <g stroke="#000" strokeWidth="2">
        <path d="M661 116L669 179L661 187L213 546M90 460L213 546L364 654M661 187L784 248" />
        <path d="M1171 1012L1234 987L1308 932L1360 862L1390 785L1393 705L1374 615L1340 549L1289 491L1231 442L800 234L709 315L674 298L458 486L494 508L366 622L364 654L835 989L897 1012" />
        <path d="M458 486L465 505L482 514M473 732L469 737L475 752L793 980L825 1006L836 1012M535 775L543 788L760 958M535 775L543 790" />
      </g>
      <path d="M835 989L862 998L890 1010" stroke="#000" strokeWidth="3" />
      {/* guides */}
      <path d="M1200 118L372 1010M458 321L1616 984" stroke="#000" strokeWidth="1" strokeDasharray="5 4" />
      <path d="M677 321L704 557" stroke="#999" strokeWidth="1" strokeDasharray="2 2" />
      <path d="M906 798L1000 840L1080 875L1165 921L1080 878L1000 843Z" fill="#b4b4b4" stroke="#c0c0c0" strokeWidth="0.500" />
      <path d="M1165 921L1210 943" stroke="#bbb" strokeWidth="1" strokeDasharray="8 3" />
      <path d="M739 482L778 454L829 437L888 432L955 438L1021 457L1087 485L1149 523L1201 569L1240 621L1265 673L1270 729L1253 777L1216 814L1158 840L1086 847L1005 839L927 813L855 776L787 725L742 671L714 617L705 566L714 519Z" stroke="#0a0ab0" strokeWidth="2.500" />
      <path d="M855 364L1350 620L1141 960L605 616Z" stroke="#fff81e" strokeWidth="4" />
      {/* scale grips */}
      <path d="M732 478L739 475L745 479V486L738 490L732 486Z" fill="#e58080" stroke="#511" />
      <path d="M732 478L738 482L745 479M738 482V490" stroke="#511" />
      <path d="M1251 768L1261 772L1255 786L1245 781Z" fill="#e8101c" stroke="#511" strokeWidth="1.500" />
      <path d="M1248 775L1258 779" stroke="#511" />
      <path d="M1234 787L1241 787L1239 789L1241 792L1236 794Z" fill="#000" />
      <path d="M1246 791L1251 791L1250 798L1243 796L1246 795Z" fill="#000" />
    </svg>
  </main>
);

const Tick = ({ grey }: { grey?: boolean }) => (
  <svg viewBox="0 0 15 15" className="pointer-events-none col-start-1 row-start-1 h-[15px] w-[15px]" fill="none" stroke={grey ? "#9a9a9a" : "#000"} strokeWidth="2">
    <path d="M4 7L6 10L11 4" />
  </svg>
);

type CheckProps = { id: string; label: string; checked?: boolean; disabled?: boolean };
const Check = ({ id, label, checked, disabled }: CheckProps) => (
  <div className="flex h-full items-center gap-[7px]">
    <span className="grid">
      <input
        id={id}
        type="checkbox"
        defaultChecked={checked}
        disabled={disabled}
        className="col-start-1 row-start-1 h-[15px] w-[15px] appearance-none border-2 border-t-[#7c7c7c] border-r-white border-b-white border-l-[#7c7c7c] bg-white disabled:bg-[#f1f1f1]"
      />
      {checked && <Tick grey={disabled} />}
    </span>
    <label htmlFor={id} className={disabled ? "text-[#a3a3a3]" : "text-black"}>{label}</label>
  </div>
);

const PanelHeader = ({ title }: { title: string }) => (
  <div className="flex h-6 shrink-0 items-center border border-[#b0b0b0] bg-linear-to-b from-[#ececec] to-[#b6b6b6] pr-[3px] pl-2">
    <svg viewBox="0 0 10 9" className="h-[9px] w-[10px]"><path d="M0 0H10L5 9Z" /></svg>
    <h2 className="flex-1 pl-2 text-base leading-5">{title}</h2>
    <button aria-label={`${title} 닫기`} className="flex h-4 w-4 items-center justify-center border border-[#9a9a9a] bg-[#e6e6e6]">
      <svg viewBox="0 0 8 8" className="h-[7px] w-[7px]" stroke="#000" strokeWidth="2"><path d="M1 1L7 7M7 1L1 7" /></svg>
    </button>
  </div>
);

const RoundButton = ({ name, minus }: { name: string; minus?: boolean }) => (
  <button aria-label={name}>
    <svg viewBox="0 0 18 18" className="h-[18px] w-[18px]" fill="none" stroke={minus ? "#9a9a9a" : "#000"} strokeWidth="1.500">
      <circle cx="9" cy="9" r="8" />
      <path d={minus ? "M4 9H14" : "M4 9H14M9 4V14"} strokeWidth={minus ? 2 : 3} />
    </svg>
  </button>
);

const DetailsButton = () => (
  <button aria-label="세부 정보">
    <svg viewBox="0 0 16 18" className="h-[18px] w-4">
      <path d="M6 0L16 9L6 18Z" fill="#000" />
      <path d="M1 3H8V15H1Z" fill="#fff" stroke="#222" />
      <path d="M1 3H8V7H1Z" fill="#3f8ade" />
      <path d="M2 10H8M2 12H8" stroke="#888" />
    </svg>
  </button>
);

const Tray = () => (
  <aside className="flex w-[302px] shrink-0 flex-col bg-[#f1f1f1] pl-[5px] text-xs">
    <header className="flex h-[27px] shrink-0 items-center bg-linear-to-b from-[#c0d0e0] to-[#d5e3f1] pr-1 pl-1">
      <h1 className="flex-1 text-[15px] leading-5">기본 트레이</h1>
      <button aria-label="고정" className="mr-2">
        <svg viewBox="0 0 8 10" className="h-[10px] w-2" fill="none" stroke="#000"><path d="M2 6V1H6V6M5 1V6M0 6.500H8M4 6V10" /></svg>
      </button>
      <button aria-label="닫기" className="flex h-3 w-3 items-center justify-center bg-[#c8504f]">
        <svg viewBox="0 0 6 6" className="h-[6px] w-[6px]" stroke="#fff" strokeWidth="1.500"><path d="M0 0L6 6M6 0L0 6" /></svg>
      </button>
    </header>
    <div className="flex min-h-0 flex-1">
      <div className="flex min-w-0 flex-1 flex-col">
        <div className="shrink-0 pb-2">
          <p className="h-[19px] pl-1 leading-[18px]">표시:</p>
          <div className="flex flex-col pl-[74px]">
            <div className="h-[22px]"><Check id="onFaces" label="면에" checked disabled /></div>
            <div className="h-[22px]"><Check id="onGround" label="바닥에" checked disabled /></div>
            <div className="h-[22px]"><Check id="fromEdges" label="가장자리에" disabled /></div>
          </div>
        </div>

        <PanelHeader title="가장자리 부드럽게" />
        <section className="shrink-0 px-[9px] pt-[9px] pb-[13px]">
          <label htmlFor="angle" className="block leading-[18px]">법선 간 각도:</label>
          <output className="mt-2 block pl-[126px] text-[13px] leading-[18px]">17.3&nbsp;&nbsp;도</output>
          <input
            id="angle"
            type="range"
            min={0}
            max={180}
            step={0.1}
            defaultValue={17.3}
            className="mt-[10px] ml-2 block h-5 w-[237px] appearance-none bg-transparent [&::-webkit-slider-runnable-track]:h-[3px] [&::-webkit-slider-runnable-track]:border-t-2 [&::-webkit-slider-runnable-track]:border-b [&::-webkit-slider-runnable-track]:border-t-[#8c8c8c] [&::-webkit-slider-runnable-track]:border-b-white [&::-webkit-slider-thumb]:-mt-2 [&::-webkit-slider-thumb]:h-[18px] [&::-webkit-slider-thumb]:w-[9px] [&::-webkit-slider-thumb]:appearance-none [&::-webkit-slider-thumb]:rounded-b-md [&::-webkit-slider-thumb]:border-r-2 [&::-webkit-slider-thumb]:border-b-2 [&::-webkit-slider-thumb]:border-[#888] [&::-webkit-slider-thumb]:bg-[#f4f4f4]"
          />
          <div className="mt-px mr-[17px] mb-2 ml-[11px] h-[3px] border-x border-black" />
          <div className="h-5"><Check id="softNormals" label="법선 부드럽게" checked /></div>
          <div className="h-5"><Check id="softCoplanar" label="동일 평면 부드럽게" /></div>
        </section>

        <PanelHeader title="레이어" />
        <div className="flex h-8 shrink-0 items-center gap-[10px] pr-[6px] pl-[7px]">
          <RoundButton name="레이어 추가" />
          <div className="flex-1"><RoundButton name="레이어 삭제" minus /></div>
          <DetailsButton />
        </div>
        <div className="h-[220px] shrink-0 bg-white">
          <table className="w-full table-fixed border-collapse">
            <thead>
              <tr className="h-5 border-b-2 border-[#7c7c7c] bg-[#f1f1f1] text-left">
                <th className="border-r-2 border-[#7c7c7c] pl-[6px] leading-4 font-normal">이름</th>
                <th className="w-[50px] border-r-2 border-[#7c7c7c] pl-[6px] leading-4 font-normal">보기</th>
                <th className="w-10 border-r-2 border-[#7c7c7c] pl-[6px] leading-4 font-normal">색상</th>
              </tr>
            </thead>
            <tbody>
              <tr className="h-[27px]">
                <td className="pl-[6px]">
                  <div className="flex items-center gap-[5px]">
                    <input id="layer0" type="radio" defaultChecked className="h-[14px] w-[14px] appearance-none rounded-full border border-black bg-black p-0 ring-2 ring-white ring-inset" />
                    <label htmlFor="layer0" className="text-[13px]">Layer0</label>
                  </div>
                </td>
                <td className="pl-5">
                  <span className="grid w-[15px]">
                    <input type="checkbox" aria-label="Layer0 보기" defaultChecked className="col-start-1 row-start-1 h-[15px] w-[15px] appearance-none border border-[#333]" />
                    <svg viewBox="0 0 15 15" className="pointer-events-none col-start-1 row-start-1 h-[15px] w-[15px]" fill="none" stroke="#000" strokeWidth="1.500"><path d="M3 7L6 10L12 4" /></svg>
                  </span>
                </td>
                <td className="pl-[11px]">
                  <button aria-label="Layer0 색상" className="block h-5 w-5 border border-[#d05050] bg-[#ff5a5a]" />
                </td>
              </tr>
            </tbody>
          </table>
        </div>
        <div className="my-px h-[6px] shrink-0 border border-[#b0b0b0]" />

        <PanelHeader title="장면" />
        <div className="flex h-[33px] shrink-0 items-center border-b border-[#a0a0a0] pr-[6px] pl-[7px]">
          <button aria-label="장면 업데이트">
            <svg viewBox="0 0 18 18" className="h-[18px] w-[18px]" fill="none" stroke="#8a8a8a" strokeWidth="2">
              <path d="M2 7Q5 1 10 2Q14 3 15 6M16 11Q13 17 8 16Q4 15 3 12" />
              <path d="M17 2V7H12ZM1 16V11H6Z" fill="#8a8a8a" stroke="none" />
            </svg>
          </button>
          <div className="ml-2 flex flex-1 gap-[10px]">
            <RoundButton name="장면 추가" />
            <RoundButton name="장면 삭제" minus />
          </div>
          <button aria-label="아래로" className="mr-4">
            <svg viewBox="0 0 8 14" className="h-[14px] w-2" fill="none" stroke="#8a8a8a" strokeWidth="2"><path d="M8 1Q4 1 4 5V10" /><path d="M0 9H8L4 14Z" fill="#8a8a8a" stroke="none" /></svg>
          </button>
          <button aria-label="위로" className="mr-4">
            <svg viewBox="0 0 8 14" className="h-[14px] w-2" fill="none" stroke="#8a8a8a" strokeWidth="2"><path d="M0 13Q4 13 4 9V4" /><path d="M0 5H8L4 0Z" fill="#8a8a8a" stroke="none" /></svg>
          </button>
          <button aria-label="보기 옵션" className="mr-[7px]">
            <svg viewBox="0 0 25 18" className="h-[18px] w-[25px]" fill="none" stroke="#222" strokeWidth="2">
              <path d="M1 2H6V7H1ZM1 12H6V17H1Z" />
              <path d="M9 2H16M9 5H14M9 12H16M9 15H14" strokeWidth="1.500" />
              <path d="M19 8H25L22 11Z" fill="#000" stroke="none" />
            </svg>
          </button>
          <button aria-label="장면 세부" className="mr-[14px]">
            <svg viewBox="0 0 12 18" className="h-[18px] w-3">
              <path d="M0 7H12V18H0Z" />
              <path d="M1 1H11V6L6 7L1 6Z" fill="#fff" stroke="#555" />
              <path d="M2 2H10L6 6Z" />
              <path d="M3 12.500H9M6 9.500V15.500" stroke="#fff" strokeWidth="2" />
            </svg>
          </button>
          <DetailsButton />
        </div>
        <div className="min-h-0 flex-1 bg-white" />
      </div>
      <div className="flex w-[21px] shrink-0 flex-col items-end border-l border-white">
        <button aria-label="위로 스크롤" className="flex h-6 w-[19px] items-center justify-center">
          <svg viewBox="0 0 10 7" className="h-[7px] w-[10px]" fill="none" stroke="#555" strokeWidth="2"><path d="M1 6L5 2L9 6" /></svg>
        </button>
        <div className="flex flex-1 flex-col justify-end pb-[61px]">
          <div className="h-[21px] w-5 bg-[#cdcdcd]" />
        </div>
        <button aria-label="아래로 스크롤" className="flex h-[19px] w-[19px] items-center justify-center">
          <svg viewBox="0 0 10 7" className="h-[7px] w-[10px]" fill="none" stroke="#555" strokeWidth="2"><path d="M1 1L5 5L9 1" /></svg>
        </button>
      </div>
    </div>
  </aside>
);

const StatusBar = () => (
  <footer className="flex h-[26px] shrink-0 overflow-hidden bg-[#f1f1f1] pt-[6px] text-[17px] leading-5">
    <div className="flex gap-4 pt-px pl-[6px]">
      <svg viewBox="0 0 19 19" className="h-[19px] w-[19px]" fill="none">
        <circle cx="9.500" cy="9.500" r="8.500" stroke="#aaa" />
        <path d="M9.500 17L6 8Q6 4 9.500 4Q13 4 13 8Z" fill="#999" />
      </svg>
      <svg viewBox="0 0 19 19" className="h-[19px] w-[19px]" fill="none">
        <circle cx="9.500" cy="9.500" r="8.500" stroke="#000" strokeWidth="1.500" />
        <circle cx="9.500" cy="4.500" r="1.500" fill="#000" />
        <path d="M7 7H12V11H11V17H8V11H7Z" fill="#000" />
      </svg>
      <svg viewBox="0 0 19 19" className="h-[19px] w-[19px]" fill="none">
        <circle cx="9.500" cy="9.500" r="8.500" stroke="#aaa" />
        <circle cx="9.500" cy="7" r="4" fill="#999" />
        <path d="M3 17Q3 12 9.500 12Q16 12 16 17Z" fill="#999" />
      </svg>
    </div>
    <div className="mt-1 ml-[13px] h-[14px] border-l border-[#999]" />
    <p className="flex-1 pl-[9px] whitespace-nowrap">
      손잡이를 잡고 움직여 개체의 배율을 조절하십시오. Ctrl = 중심 정보. Shift = 균일 토글
    </p>
    <div className="mt-1 h-[14px] border-l border-[#999]" />
    <label htmlFor="measure" className="px-[10px]">녹색 배율</label>
    <input id="measure" defaultValue="1.41" className="-mt-px mr-[5px] h-6 w-[250px] border border-[#a9b5c6] bg-white px-[3px] text-[15px]" />
  </footer>
);

export default function App() {
  return (
    <div className="flex h-screen flex-col overflow-hidden bg-black py-[42px] font-['Noto_Sans_CJK_KR',sans-serif] text-black">
      <nav className="flex h-[25px] shrink-0 items-end gap-[17px] bg-white pl-[6px] text-[15px] leading-[23px]">
        {menus.map((m) => (
          <button key={m}>{m}</button>
        ))}
      </nav>
      <Toolbar />
      <div className="flex min-h-0 flex-1">
        <Palette />
        <Viewport />
        <Tray />
      </div>
      <StatusBar />
    </div>
  );
}
